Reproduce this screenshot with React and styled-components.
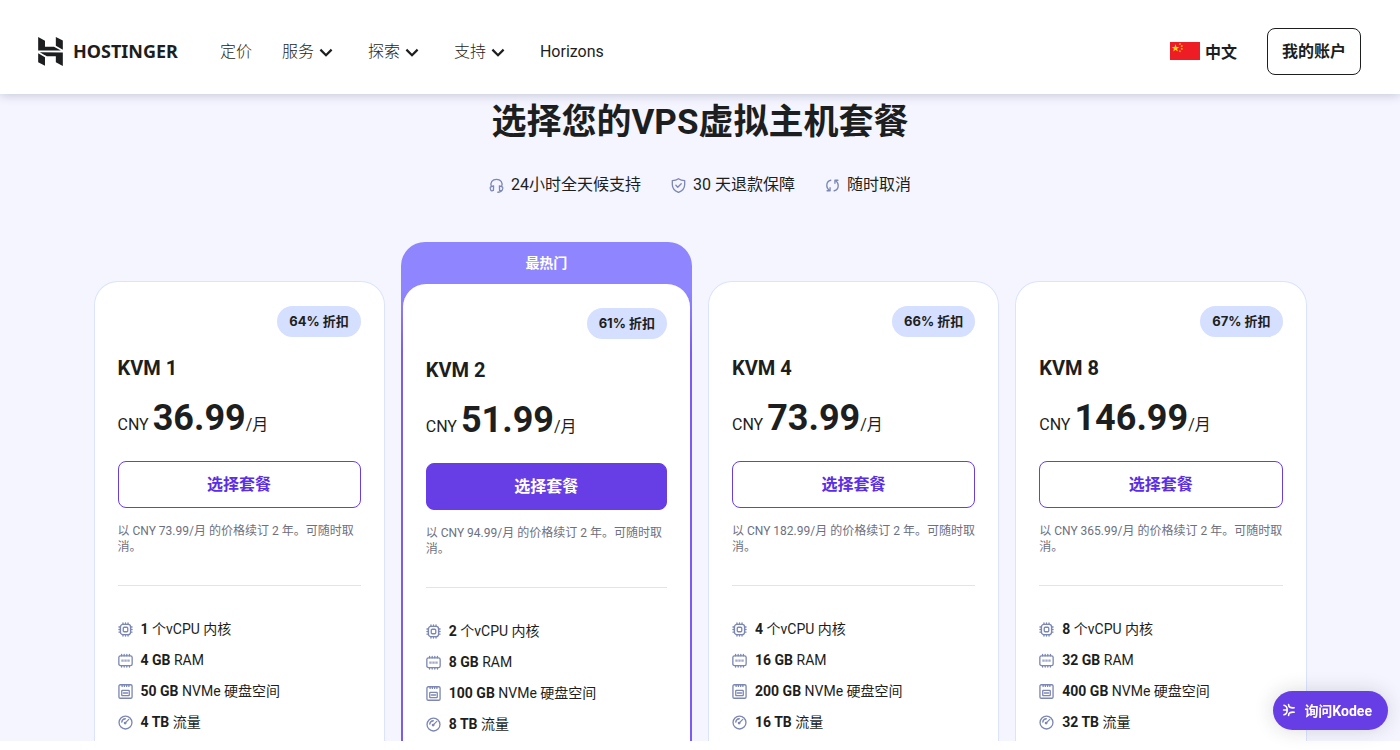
import React from 'react';
import styled, { createGlobalStyle, css } from 'styled-components';

const GlobalStyle = createGlobalStyle`
  :root {
    --primary-color: #673de6;
    --primary-light: #8f85ff;
    --dark-color: #1d1e20;
    --muted-color: #6d7081;
    --icon-color: #7c87b5;
    --border-color: #dbe3ff;
  }

  * {
    box-sizing: border-box;
  }

  body {
    margin: 0;
    background: #fff;
    color: var(--dark-color);
    font-family: Roboto, 'Noto Sans CJK SC', sans-serif;
    font-size: 16px;
    line-height: 24px;
  }

  button {
    font-family: inherit;
    cursor: pointer;
  }

  svg {
    display: block;
    flex-shrink: 0;
  }
`;

const Header = styled.header`
  position: sticky;
  top: 0;
  z-index: 10;
  display: flex;
  align-items: center;
  min-height: 94px;
  padding: 8px 39px 0 36px;
  background: #fff;
  box-shadow: 0 1px 10px rgba(40, 40, 80, 0.24);
`;

const Logo = styled.a`
  display: flex;
  align-items: center;
  gap: 8px;
  color: var(--dark-color);
  font-family: 'Noto Sans', sans-serif;
  font-size: 18px;
  font-weight: 700;
  text-decoration: none;
`;

const Nav = styled.nav`
  display: flex;
  gap: 30px;
  margin-left: 42px;
`;

const navItem = css`
  display: flex;
  align-items: center;
  padding: 1px 0 0;
  border: none;
  background: none;
  color: var(--dark-color);
  font-size: 16px;
  font-weight: ${props => (props.$light ? 300 : 400)};
  line-height: 24px;
  text-decoration: none;
`;

const NavLink = styled.a`
  ${navItem}
`;

const NavButton = styled.button`
  ${navItem}
`;

const HeaderActions = styled.div`
  display: flex;
  align-items: center;
  gap: 30px;
  margin-left: auto;
`;

const LanguageButton = styled.button`
  display: flex;
  align-items: center;
  gap: 5px;
  padding: 0;
  border: none;
  background: none;
  color: var(--dark-color);
  font-size: 16px;
  font-weight: 700;
`;

const AccountButton = styled.button`
  height: 47px;
  padding: 0 14px 2px;
  border: 1px solid var(--dark-color);
  border-radius: 8px;
  background: #fff;
  color: var(--dark-color);
  font-size: 16px;
  font-weight: 700;
`;

const Section = styled.section`
  padding: 4px 24px 0;
  background: #f4f5ff;
`;

const Title = styled.h1`
  margin: 0;
  font-size: 35px;
  line-height: 50px;
  font-weight: 700;
  text-align: center;
`;

const Benefits = styled.ul`
  display: flex;
  flex-wrap: wrap;
  justify-content: center;
  gap: 8px 30px;
  margin: 25px 0 0;
  padding: 0;
  list-style: none;
`;

const Benefit = styled.li`
  display: flex;
  align-items: center;
  gap: 7px;

  svg {
    color: var(--icon-color);
  }
`;

const Plans = styled.div`
  display: grid;
  grid-template-columns: repeat(4, 1fr);
  gap: 16px;
  max-width: 1213px;
  margin: 45px auto 0;
`;

const PlanWrapper = styled.article`
  display: flex;
  flex-direction: column;
  margin-top: ${props => (props.$popular ? 0 : '39px')};
  padding: ${props => (props.$popular ? '0 2px' : '1px 1px 0')};
  border-radius: 24px 24px 0 0;
  background: ${props =>
    props.$popular
      ? 'linear-gradient(var(--primary-light) 50px, #7b5cf2 110px)'
      : 'var(--border-color)'};
`;

const PopularLabel = styled.div`
  color: #fff;
  font-size: 14px;
  line-height: 42px;
  font-weight: 700;
  text-align: center;
`;

const PlanBody = styled.div`
  flex: 1;
  padding: 24px 23px 5px;
  border-radius: 23px 23px 0 0;
  background: #fff;
`;

const Discount = styled.div`
  width: fit-content;
  margin-left: auto;
  padding: 0 12px;
  border-radius: 16px;
  background: #d5dfff;
  font-family: Inter, 'Noto Sans CJK SC', sans-serif;
  font-size: 13px;
  line-height: 31px;
  font-weight: 700;
`;

const PlanName = styled.h2`
  margin: 19px 0 0;
  font-size: 20px;
  line-height: 24px;
  font-weight: 700;
`;

const Price = styled.p`
  margin: 16px 0 0;
  line-height: 44px;

  strong {
    font-size: 36px;
  }
`;

const ChooseButton = styled.button`
  display: block;
  width: 100%;
  height: 47px;
  margin-top: 14px;
  padding: 0 0 3px;
  border: 1px solid var(--primary-color);
  border-radius: 8px;
  background: ${props => (props.$filled ? 'var(--primary-color)' : '#fff')};
  color: ${props => (props.$filled ? '#fff' : '#5a2ee5')};
  font-size: 16px;
  font-weight: 700;
`;

const Renewal = styled.p`
  margin: 15px 0 0;
  color: var(--muted-color);
  font-size: 12px;
  line-height: 16px;
`;

const Divider = styled.hr`
  height: 1px;
  margin: 30px 0 31px;
  border: none;
  background: var(--border-color);
`;

const Features = styled.ul`
  display: grid;
  gap: 7px;
  margin: 0;
  padding: 0;
  list-style: none;
`;

const Feature = styled.li`
  display: flex;
  align-items: center;
  gap: 8px;
  font-size: 14px;

  svg {
    color: var(--icon-color);
  }
`;

const ChatButton = styled.button`
  position: fixed;
  right: 12px;
  bottom: 20px;
  z-index: 20;
  display: flex;
  align-items: center;
  gap: 7px;
  height: 39px;
  padding: 0 16px 2px 8px;
  border: none;
  border-radius: 20px;
  background: var(--primary-color);
  box-shadow: 0 0 20px rgba(29, 30, 32, 0.16);
  color: #fff;
  font-size: 14px;
  font-weight: 700;
`;

const LogoMark = () => (
  <svg width="29" height="29" viewBox="0 0 24 24" fill="currentColor" aria-hidden="true">
    <path d="M16.415 0v7.16l5.785 3.384V2.949L16.415 0ZM1.8 0v11.237h18.815L14.89 8.09l-7.457-.003V3.024L1.8 0Zm14.615 20.894v-5.019l-7.514-.005c.007.033-5.82-3.197-5.82-3.197l19.119.091V24l-5.785-3.106ZM1.8 13.551v7.343l5.633 2.949v-6.988L1.8 13.551Z" />
  </svg>
);

const ChevronIcon = () => (
  <svg width="24" height="24" viewBox="0 0 24 24" fill="none" stroke="currentColor" strokeWidth="2.2" aria-hidden="true">
    <path d="M6.4 9.6 12 15.2l5.6-5.6" />
  </svg>
);

const star = (cx, cy, r, turn = 0) =>
  Array.from({ length: 10 }, (_, i) => {
    const radius = i % 2 ? r * 0.4 : r;
    const angle = (i * Math.PI) / 5 - Math.PI / 2 + turn;
    return `${cx + radius * Math.cos(angle)},${cy + radius * Math.sin(angle)}`;
  }).join(' ');

const FlagIcon = () => (
  <svg width="30" height="18" viewBox="0 0 30 18" aria-hidden="true">
    <path fill="#ee1c25" d="M0 0h30v18H0z" />
    <g fill="#ffde00">
      <polygon points={star(5.5, 6.2, 4)} />
      <polygon points={star(9.9, 2, 1.3, 0.4)} />
      <polygon points={star(11.8, 4.1, 1.3, 0.8)} />
      <polygon points={star(11.8, 7, 1.3)} />
      <polygon points={star(9.9, 9.2, 1.3, 0.4)} />
    </g>
  </svg>
);

const LineIcon = ({ children, size = 15 }) => (
  <svg
    width={size}
    height={size}
    viewBox="0 0 16 16"
    fill="none"
    stroke="currentColor"
    strokeWidth="1.4"
    strokeLinecap="round"
    strokeLinejoin="round"
    aria-hidden="true"
  >
    {children}
  </svg>
);

const HeadsetIcon = () => (
  <LineIcon>
    <path d="M2.6 9.2C.8 4.6 3.7 1.4 8 1.4s7.2 3.2 5.4 7.8" />
    <path d="M4.9 8.3 2.3 9.1c-.8.3-1.2 1-1 1.8l.5 1.7c.2.8 1 1.2 1.7 1l1.2-.4ZM11.1 8.3l2.6.8c.8.3 1.2 1 1 1.8l-.5 1.7c-.2.8-1 1.2-1.7 1l-1.2-.4Z" />
    <path d="M13.2 13.5c-.4 1.2-1.7 1.7-3.8 1.7" />
  </LineIcon>
);

const ShieldIcon = () => (
  <LineIcon>
    <path d="M8 .8C6 2.2 3.9 2.7 1.4 2.7v4.2c0 4 2.5 6.8 6.6 8.5 4.1-1.7 6.6-4.5 6.6-8.5V2.7C12.1 2.7 10 2.2 8 .8Z" />
    <path d="m5.2 7.8 2 2 3.7-3.7" />
  </LineIcon>
);

const RefreshIcon = () => (
  <LineIcon>
    <path d="M6.2 2.4C3.4 3 1.9 5.2 1.9 8c0 2.2 1.1 4 2.9 5.1" />
    <path d="M2.2 13.6h3.2v-3.2" />
    <path d="M9.8 13.6c2.8-.6 4.3-2.8 4.3-5.6 0-2.2-1.1-4-2.9-5.1" />
    <path d="M13.8 2.4h-3.2v3.2" />
  </LineIcon>
);

const CpuIcon = () => (
  <LineIcon>
    <rect x="2.6" y="2.6" width="10.8" height="10.8" rx="2.6" />
    <rect x="5.6" y="5.6" width="4.8" height="4.8" rx="1" />
    <path d="M5.3 2.6V1M8 2.6V1M10.7 2.6V1M5.3 15v-1.6M8 15v-1.6M10.7 15v-1.6M2.6 5.3H1M2.6 8H1M2.6 10.7H1M15 5.3h-1.6M15 8h-1.6M15 10.7h-1.6" />
  </LineIcon>
);

const RamIcon = () => (
  <LineIcon>
    <rect x=".9" y="3" width="14.2" height="10.4" rx="1.8" />
    <path d="M3.8 3V1.4M6.6 3V1.4M9.4 3V1.4M12.2 3V1.4M3.8 15v-1.6M6.6 15v-1.6M9.4 15v-1.6M12.2 15v-1.6" />
    <path strokeWidth="2.4" strokeLinecap="butt" strokeDasharray="2.6 .6" opacity=".7" d="M3.5 8.2h9" />
  </LineIcon>
);

const DiskIcon = () => (
  <LineIcon>
    <rect x="1" y=".8" width="14" height="14.4" rx="1.4" />
    <rect x="4" y="6.8" width="8" height="5.6" rx=".6" />
    <path d="M4.4 1v1.6M6.8 1v1.6M9.2 1v1.6M11.6 1v1.6M5.8 9.6h4.4" />
  </LineIcon>
);

const SpeedIcon = () => (
  <LineIcon>
    <circle cx="8" cy="8" r="6.9" />
    <path d="M4 7.6A4.2 4.2 0 0 1 7.8 4" />
    <circle cx="7.6" cy="8.6" r=".8" />
    <path d="m8.3 7.9 3.2-3.2" />
  </LineIcon>
);

const KodeeIcon = () => (
  <svg width="16" height="16" viewBox="0 0 16 16" fill="none" stroke="currentColor" strokeWidth="1.6" strokeLinecap="round" aria-hidden="true">
    <path d="M3 3.2c2 .4 3.200 1.800 3.200 4.800s-1.200 4.400-3.200 4.800M2.600 8h3" />
    <path d="M7.600 2.600c0 2.600 1.700 3.500 5.600 3.200M7.600 13.400c0-2.600 1.700-3.500 5.600-3.200" />
  </svg>
);

const menus = ['服务', '探索', '支持'];

const benefits = [
  { icon: HeadsetIcon, text: '24小时全天候支持' },
  { icon: ShieldIcon, text: '30 天退款保障' },
  { icon: RefreshIcon, text: '随时取消' }
];

const plans = [
  { name: 'KVM 1', discount: 64, price: '36.99', renewal: '73.99', cores: 1, ram: 4, disk: 50, traffic: 4 },
  { name: 'KVM 2', discount: 61, price: '51.99', renewal: '94.99', cores: 2, ram: 8, disk: 100, traffic: 8, popular: true },
  { name: 'KVM 4', discount: 66, price: '73.99', renewal: '182.99', cores: 4, ram: 16, disk: 200, traffic: 16 },
  { name: 'KVM 8', discount: 67, price: '146.99', renewal: '365.99', cores: 8, ram: 32, disk: 400, traffic: 32 }
];

const PlanCard = ({ plan }) => (
  <PlanWrapper $popular={plan.popular}>
    {plan.popular && <PopularLabel>最热门</PopularLabel>}
    <PlanBody>
      <Discount>{`${plan.discount}% 折扣`}</Discount>
      <PlanName>{plan.name}</PlanName>
      <Price>
        CNY <strong>{plan.price}</strong>/月
      </Price>
      <ChooseButton type="button" $filled={plan.popular}>选择套餐</ChooseButton>
      <Renewal>{`以 CNY ${plan.renewal}/月 的价格续订 2 年。可随时取消。`}</Renewal>
      <Divider />
      <Features>
        <Feature>
          <CpuIcon />
          <span><b>{plan.cores}</b> 个vCPU 内核</span>
        </Feature>
        <Feature>
          <RamIcon />
          <span><b>{plan.ram} GB</b> RAM</span>
        </Feature>
        <Feature>
          <DiskIcon />
          <span><b>{plan.disk} GB</b> NVMe 硬盘空间</span>
        </Feature>
        <Feature>
          <SpeedIcon />
          <span><b>{plan.traffic} TB</b> 流量</span>
        </Feature>
      </Features>
    </PlanBody>
  </PlanWrapper>
);

const App = () => {
  return (
    <>
      <GlobalStyle />
      <Header>
        <Logo href="#">
          <LogoMark />
          HOSTINGER
        </Logo>
        <Nav>
          <NavLink href="#pricing" $light>定价</NavLink>
          {menus.map(menu => (
            <NavButton key={menu} type="button" $light>
              {menu}
              <ChevronIcon />
            </NavButton>
          ))}
          <NavLink href="#horizons">Horizons</NavLink>
        </Nav>
        <HeaderActions>
          <LanguageButton type="button">
            <FlagIcon />
            中文
          </LanguageButton>
          <AccountButton type="button">我的账户</AccountButton>
        </HeaderActions>
      </Header>

      <Section id="pricing">
        <Title>选择您的VPS虚拟主机套餐</Title>
        <Benefits>
          {benefits.map(({ icon: Icon, text }) => (
            <Benefit key={text}>
              <Icon />
              {text}
            </Benefit>
          ))}
        </Benefits>
        <Plans>
          {plans.map(plan => (
            <PlanCard key={plan.name} plan={plan} />
          ))}
        </Plans>
      </Section>

      <ChatButton type="button">
        <KodeeIcon />
        询问Kodee
      </ChatButton>
    </>
  );
};

export default App;
